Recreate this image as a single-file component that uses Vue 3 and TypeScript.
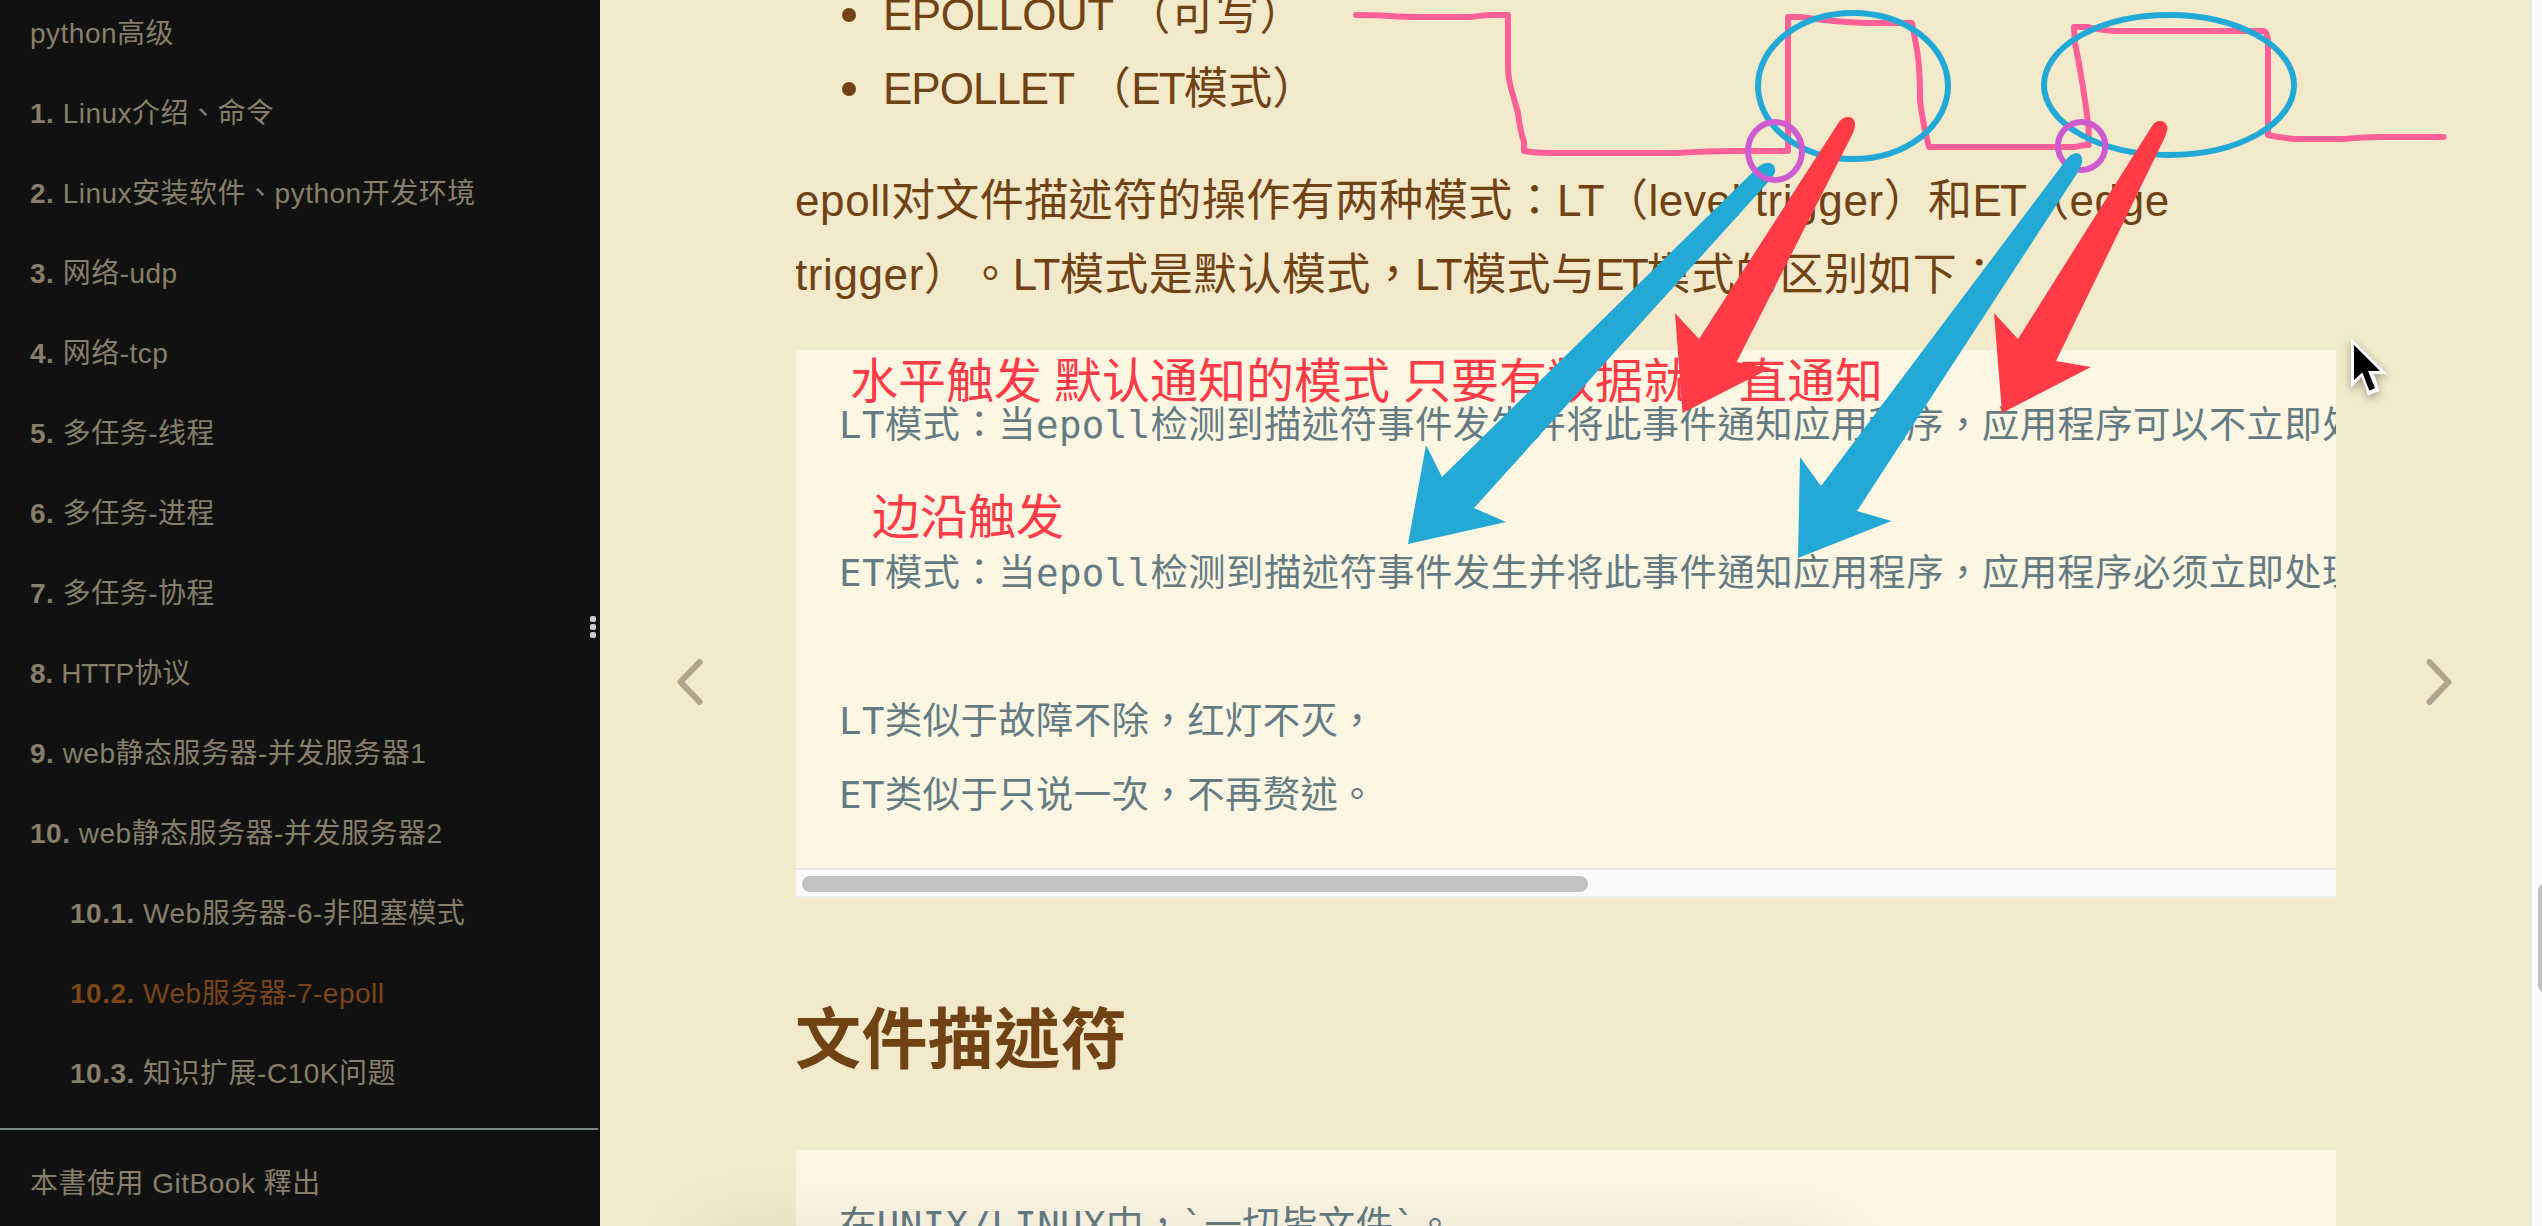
<script setup lang="ts">
interface Chapter {
  num?: string
  title: string
  sub?: boolean
  active?: boolean
  tight?: boolean
}

const chapters: Chapter[] = [
  { title: 'python高级' },
  { num: '1.', title: 'Linux介绍、命令' },
  { num: '2.', title: 'Linux安装软件、python开发环境' },
  { num: '3.', title: '网络-udp' },
  { num: '4.', title: '网络-tcp' },
  { num: '5.', title: '多任务-线程' },
  { num: '6.', title: '多任务-进程' },
  { num: '7.', title: '多任务-协程' },
  { num: '8.', title: 'HTTP协议', tight: true },
  { num: '9.', title: 'web静态服务器-并发服务器1' },
  { num: '10.', title: 'web静态服务器-并发服务器2' },
  { num: '10.1.', title: 'Web服务器-6-非阻塞模式', sub: true },
  { num: '10.2.', title: 'Web服务器-7-epoll', sub: true, active: true },
  { num: '10.3.', title: '知识扩展-C10K问题', sub: true },
]

const modeCode = [
  'LT模式：当epoll检测到描述符事件发生并将此事件通知应用程序，应用程序可以不立即处理该事件。',
  '',
  'ET模式：当epoll检测到描述符事件发生并将此事件通知应用程序，应用程序必须立即处理该事件。',
  '',
  'LT类似于故障不除，红灯不灭，',
  'ET类似于只说一次，不再赘述。',
].join('\n')

const fileCode = '在UNIX/LINUX中，`一切皆文件`。'
</script>

<template>
  <div class="book">
    <aside class="summary">
      <ul class="chapters">
        <li
          v-for="c in chapters"
          :key="c.title"
          class="chapter"
          :class="{ sub: c.sub, active: c.active, tight: c.tight }"
        >
          <b v-if="c.num">{{ c.num }}</b>{{ c.num ? ' ' : '' }}{{ c.title }}
        </li>
      </ul>
      <div class="credit">本書使用 GitBook 釋出</div>
      <div class="handle"><i></i><i></i><i></i></div>
    </aside>

    <div class="body">
      <div class="nav">
        <svg class="chevron prev" width="30" height="48" viewBox="0 0 30 48"><path d="M24.5 4.2 5.5 24 24.5 43.8" /></svg>
      </div>
      <main class="page">
        <ul class="flags">
          <li><span class="out">EPOLLOUT</span> （可写）</li>
          <li><span class="elt">EPOLLET</span> （<span class="et">ET</span>模式）</li>
        </ul>
        <p class="para">
          <span class="lat">epoll</span>对文件描述符的操作有两种模式：<span class="lt">LT</span>（<span class="lat">level trigger</span>）和<span class="et">ET</span>（<span class="lat">edge</span><br />
          <span class="lat">trigger</span>）。<span class="lt">LT</span>模式是默认模式，<span class="lt">LT</span>模式与<span class="et snug">ET</span>模式的区别如下：
        </p>
        <div class="code first">
          <pre>{{ modeCode }}</pre>
          <div class="hbar"><div class="hthumb"></div></div>
        </div>
        <h2>文件描述符</h2>
        <div class="code second">
          <pre>{{ fileCode }}</pre>
        </div>
      </main>
      <div class="nav">
        <svg class="chevron next" width="30" height="48" viewBox="0 0 30 48"><path d="M5.5 4.2 24.5 24 5.5 43.8" /></svg>
      </div>
      <div class="vbar"><div class="vthumb"></div></div>
    </div>

    <div class="dock-shadow"></div>

    <svg class="ink" width="2542" height="1226" viewBox="0 0 2542 1226">
      <g class="note">
        <text x="850" y="398">水平触发</text>
        <text x="1054" y="398">默认通知的模式</text>
        <text x="1403" y="398">只要有数据就一直通知</text>
        <text x="872" y="534">边沿触发</text>
      </g>
      <path
        class="wave"
        d="M1356 15 C1385 15 1395 17 1419 17 H1470 Q1485 15 1492 15 H1508 V65 Q1508 78 1511 88 L1518 113 Q1520 130 1524 142 V151 Q1535 153 1550 153 H1676 Q1710 151 1735 151 H1788 V17 H1800 Q1835 22 1866 23 H1912 L1917 50 Q1920 67 1920 100 Q1923 125 1929 147 H2075 Q2081 145 2088.6 145 V127 Q2083 82 2075 43 L2074 27 H2088 Q2098 30 2114 31 H2264 Q2268 33 2268 43 V135 Q2285 139 2301 139 H2344 Q2365 137 2380 137 H2443.6"
      />
      <ellipse class="ring" cx="1853" cy="86" rx="95" ry="73" />
      <ellipse class="ring" cx="2169" cy="85" rx="125" ry="70" />
      <path class="blue" d="M1759 166 Q1764 162.5 1769 162.7 Q1776 164 1775 172 Q1774 175 1771 179 L1474 508 1506 522 1408 544 1426 445 1442 477Z" />
      <ellipse class="edge" cx="1775" cy="151" rx="27" ry="29" />
      <ellipse class="edge" cx="2081.6" cy="146" rx="23.7" ry="24" />
      <path class="blue" d="M2066 160 Q2071 153 2077 153 Q2083 154 2082 163 L2078 172 1857 511 1891.5 521 1798 558 1800 457 1821 486Z" />
      <path class="red" d="M1839 122 Q1843 117 1848 117 Q1855 117 1855 125 Q1855 129 1852 135 L1736.6 362 1771 368 1682.5 413 1675 313 1699 339Z" />
      <path class="red" d="M2152 126 Q2155 121 2160 121 Q2167 121 2167.500 129 L2165 137 2056 361 2091 367 2002 413 1994 313 2018 339Z" />
      <g class="cursor">
        <path fill="#fff" d="M2351 338 V388 L2361.500 377 2368 395.500 2379.500 391 2374 374 H2387.500Z" />
        <path fill="#000" d="M2354 345 V380 L2362.300 372.500 2369.400 390.700 2375 388 2368 371 H2380Z" />
      </g>
    </svg>
  </div>
</template>

<style>
body {
  margin: 0;
  overflow: hidden;
}
</style>

<style scoped>
.book {
  position: relative;
  display: flex;
  width: 2542px;
  height: 1226px;
  overflow: hidden;
  background: #f3eacb;
  color: #704214;
  font-family: "Liberation Sans", "Noto Sans CJK TC", sans-serif;
  letter-spacing: 0.4px;
  text-spacing-trim: space-all;
}
.summary {
  position: relative;
  flex: none;
  box-sizing: border-box;
  width: 600px;
  padding-right: 2px;
  background: #111;
  color: #877f6a;
  font-size: 28px;
  line-height: 80px;
  letter-spacing: 0.5px;
  white-space: nowrap;
}
.chapters {
  list-style: none;
  margin: -6px 0 14px;
  padding: 0;
}
.chapter {
  height: 80px;
  padding-left: 30px;
}
.chapter.sub {
  padding-left: 70px;
}
.chapter.active {
  color: #7a4518;
}
.chapter.tight {
  letter-spacing: 0;
}
.credit {
  padding: 14px 0 0 30px;
  border-top: 2px solid #7e888b;
}
.handle {
  position: absolute;
  right: 4px;
  top: 616px;
  display: flex;
  flex-direction: column;
  gap: 2px;
}
.handle i {
  width: 6px;
  height: 6px;
  border-radius: 2px;
  background: #ccc;
}
.body {
  flex: 1;
  display: flex;
}
.nav {
  flex: none;
  box-sizing: border-box;
  width: 194px;
  height: 1226px;
  padding-top: 138px;
  display: flex;
  align-items: center;
}
.nav:first-child {
  width: 196px;
}
.chevron {
  fill: none;
  stroke: #b0a48f;
  stroke-width: 6;
  stroke-linecap: round;
  stroke-linejoin: round;
}
.prev {
  margin-left: 75px;
}
.next {
  margin-left: 88px;
}
.page {
  flex: none;
  width: 1540px;
  height: 1226px;
  overflow: hidden;
  font-size: 44px;
  line-height: 74px;
  white-space: nowrap;
}
.flags {
  list-style: none;
  margin: -22px 0 38px;
  padding: 0;
}
.flags li {
  display: flex;
  align-items: center;
  white-space: pre;
}
.flags li::before {
  content: "";
  width: 14px;
  height: 14px;
  margin: 0 27px 0 46px;
  border-radius: 50%;
  background: #704214;
}
.out {
  letter-spacing: -0.5px;
}
.elt {
  letter-spacing: -1px;
}
.et {
  letter-spacing: -1.8px;
}
.et.snug {
  letter-spacing: -2.6px;
}
.lt {
  letter-spacing: -0.5px;
}
.lat {
  letter-spacing: 0.6px;
}
.para {
  margin: 0 0 38px -1px;
}
.code {
  background: #fdf6e3;
  color: #657b83;
  overflow: hidden;
}
pre {
  margin: 0;
  padding: 38px 43px 36px;
  font-family: "DejaVu Sans Mono", "Noto Sans CJK TC", monospace;
  font-size: 37.4px;
  line-height: 74px;
}
.hbar {
  box-sizing: border-box;
  height: 30px;
  padding: 6px;
  border-top: 2px solid #e7e7e7;
  border-bottom: 2px solid #ececec;
  background: #fafafa;
}
.hthumb {
  width: 786px;
  height: 16px;
  border-radius: 8px;
  background: #c1c1c1;
}
h2 {
  margin: 105px 0 73px;
  font-size: 66px;
  line-height: 74px;
  font-weight: 700;
  text-indent: -1px;
}
.second {
  height: 120px;
}
.vbar {
  flex: none;
  box-sizing: border-box;
  width: 12px;
  height: 1226px;
  padding: 883px 0 0 6px;
  border-left: 2px solid #e7e7e7;
  background: #fafafa;
  overflow: hidden;
}
.vthumb {
  width: 16px;
  height: 110px;
  border-radius: 8px;
  background: #c1c1c1;
}
.dock-shadow {
  position: absolute;
  left: 710px;
  top: 1258px;
  width: 1122px;
  height: 100px;
  box-shadow: 0 0 90px rgba(0, 0, 0, 0.18);
}
.ink {
  position: absolute;
  left: 0;
  top: 0;
}
.note {
  fill: #ff3b47;
  font-family: "Noto Sans CJK SC", sans-serif;
  font-size: 48px;
  letter-spacing: 0;
}
.wave {
  fill: none;
  stroke: #ff6098;
  stroke-width: 6;
  stroke-linecap: round;
  stroke-linejoin: round;
}
.ring {
  fill: none;
  stroke: #22a9d6;
  stroke-width: 6;
}
.edge {
  fill: none;
  stroke: #ce5bd0;
  stroke-width: 6;
}
.blue {
  fill: #22a9d6;
}
.red {
  fill: #ff3b47;
}
.cursor {
  filter: drop-shadow(0 3px 4px rgba(0, 0, 0, 0.35));
}
</style>
